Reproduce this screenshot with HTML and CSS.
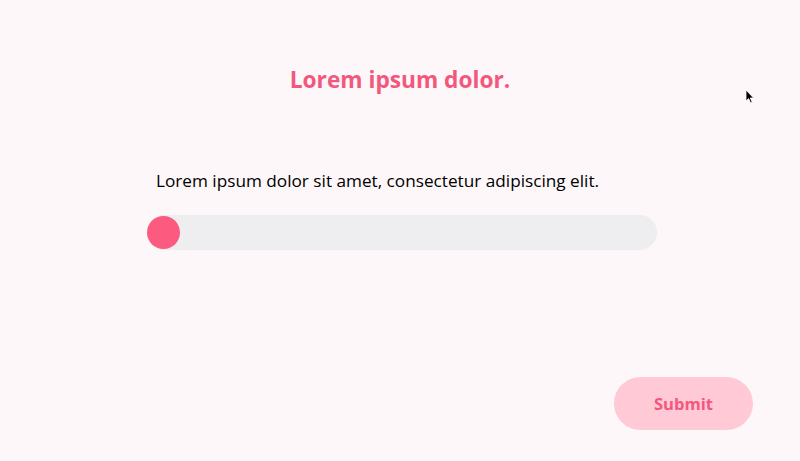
FILE: index.html
```html
<!DOCTYPE html>
<html>
<head>
<meta charset="utf-8">
<link rel="stylesheet" href="styles.css">
</head>
<body>
<main class="page">
  <h1 class="title">Lorem ipsum dolor.</h1>
  <section class="question">
    <p class="question-text">Lorem ipsum dolor sit amet, consectetur adipiscing elit.</p>
    <div class="slider">
      <div class="slider-thumb"></div>
    </div>
  </section>
  <div class="actions">
    <button class="submit">Submit</button>
  </div>
  <svg class="cursor" width="12" height="16" viewBox="0 0 12 16"><path d="M1 1 L1 12 L3.6 9.6 L5.6 14 L7.2 13.3 L5.3 9 L8.6 9 Z" fill="#000" stroke="#fff" stroke-width="0.8"/></svg>
</main>
</body>
</html>
```
FILE: styles.css
```css
* { box-sizing: border-box; }
html, body { margin: 0; padding: 0; }
body {
  background: #fdf7f9;
  font-family: "Open Sans", "Noto Sans", sans-serif;
}
.page {
  position: relative;
  width: 800px;
  height: 461px;
  display: flex;
  flex-direction: column;
}
.title {
  margin: 64px 0 0;
  text-align: center;
  font-size: 22.7px;
  font-weight: 700;
  color: #f4577d;
  line-height: 32px;
}
.question {
  margin: 73px 0 0 147px;
  width: 510px;
}
.question-text {
  margin: 0 0 0 9px;
  font-size: 17.2px;
  line-height: 24px;
  color: #000;
}
.slider {
  margin-top: 22px;
  height: 35px;
  border-radius: 18px;
  background: #eeedef;
  display: flex;
  align-items: center;
}
.slider-thumb {
  width: 33px;
  height: 33px;
  border-radius: 50%;
  background: #fc5a7e;
}
.actions {
  margin-top: auto;
  padding: 0 47px 31px 0;
  display: flex;
  justify-content: flex-end;
}
.submit {
  width: 139px;
  height: 53px;
  border: none;
  border-radius: 27px;
  background: #ffcad6;
  color: #f4577d;
  font-family: "Open Sans", "Noto Sans", sans-serif;
  font-size: 16.6px;
  font-weight: 700;
}
.cursor {
  position: absolute;
  left: 745px;
  top: 89px;
}
```
